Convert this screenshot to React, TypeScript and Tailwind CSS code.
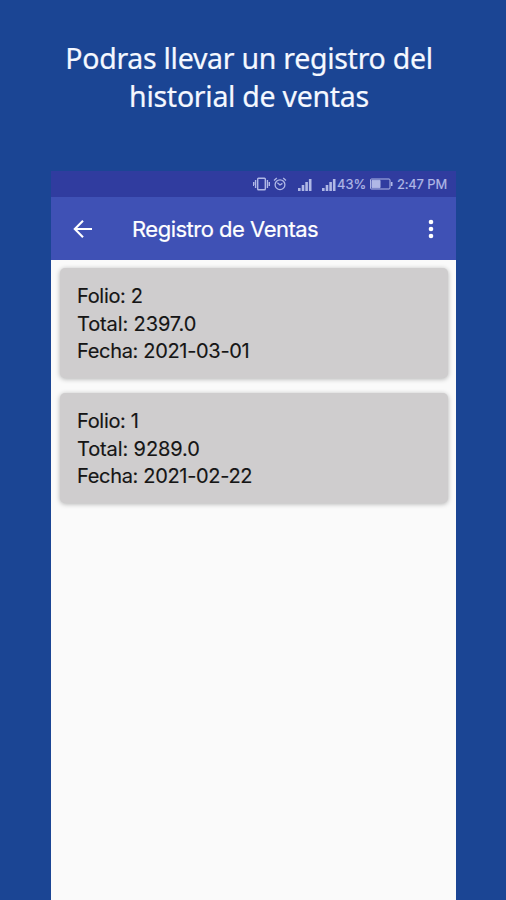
import React, { FC } from 'react';

interface ISale {
  folio: number;
  total: string;
  fecha: string;
}

const sales: ISale[] = [
  { folio: 2, total: '2397.0', fecha: '2021-03-01' },
  { folio: 1, total: '9289.0', fecha: '2021-02-22' },
];

const SignalIcon: FC = () => (
  <svg width="14" height="13" viewBox="0 0 14 13" fill="currentColor">
    <path d="M0 10h2.6v3H0zM3.7 7h2.6v6H3.7zM7.3 4h2.6v9H7.3zM10.9 1h2.6v12h-2.6z" />
  </svg>
);

const StatusBar: FC = () => (
  <div className="flex h-[26px] items-center bg-[#303c9f] pl-[202px] text-[#b0b8e6]">
    <svg width="17" height="14" viewBox="0 0 17 14" fill="none" stroke="currentColor" strokeWidth="1.4">
      <rect x="4.7" y="1.2" width="7.6" height="11.6" rx="0.8" />
      <path d="M2.6 3v8M14.4 3v8M0.7 5v4M16.3 5v4" />
    </svg>
    <svg className="ml-[3px]" width="14" height="14" viewBox="0 0 14 14" fill="none" stroke="currentColor" strokeWidth="1.3">
      <circle cx="7" cy="7.7" r="4.9" />
      <path d="M1 3.4 3.8 1M13 3.4 10.2 1M4.4 5.8 7 8l2.4-1.6" />
    </svg>
    <span className="ml-[11px]"><SignalIcon /></span>
    <span className="ml-[10px]"><SignalIcon /></span>
    <span className="ml-px w-[30px] whitespace-nowrap text-[13px] leading-none [-webkit-text-stroke:0.2px]">43%</span>
    <svg className="ml-[3px]" width="23" height="12" viewBox="0 0 23 12" fill="none" stroke="currentColor">
      <rect x="0.5" y="1" width="19.5" height="10" rx="1" />
      <path d="M2 2.3h8v7.4H2z" fill="currentColor" />
      <path d="M21.7 4v4" strokeWidth="1.6" />
    </svg>
    <span className="ml-[4px] whitespace-nowrap text-[13px] leading-none tracking-[-0.15px] [-webkit-text-stroke:0.2px]">2:47 PM</span>
  </div>
);

const AppBar: FC = () => (
  <div className="flex h-[63px] items-center bg-[#3f51b5] text-white">
    <svg className="ml-[22px]" width="20" height="20" viewBox="0 0 20 20" fill="none" stroke="currentColor" strokeWidth="2.1">
      <path d="M19 10H2.5M10 1.8 1.8 10l8.2 8.2" />
    </svg>
    <h1 className="ml-[39px] flex-1 pt-[2px] whitespace-nowrap text-[22px] tracking-[-0.5px] [-webkit-text-stroke:0.2px]">
      Registro de Ventas
    </h1>
    <svg className="mr-[22px]" width="6" height="20" viewBox="0 0 6 20" fill="currentColor">
      <circle cx="3" cy="3" r="2.3" />
      <circle cx="3" cy="10" r="2.3" />
      <circle cx="3" cy="17" r="2.3" />
    </svg>
  </div>
);

const SaleCard: FC<ISale> = ({ folio, total, fecha }) => (
  <div className="h-[110px] rounded-[5px] bg-[#cfcdce] pt-[15px] pl-[17px] text-[20px] leading-[27.5px] tracking-[-0.32px] text-[#151515] shadow-[0_1px_5px_rgba(0,0,0,0.3)] [-webkit-text-stroke:0.15px]">
    <p>Folio: {folio}</p>
    <p className="tracking-[-0.12px]">Total: {total}</p>
    <p>Fecha: {fecha}</p>
  </div>
);

const App: FC = () => (
  <div className="flex h-[900px] w-[506px] flex-col overflow-hidden bg-[#1b4594]">
    <div className="h-[171px] pt-[39px] pr-[8px] text-center font-['Noto_Sans',sans-serif] text-[28.5px] leading-[38px] tracking-[-0.28px] text-[#f5f8ff] [-webkit-text-stroke:0.2px]">
      <p>Podras llevar un registro del</p>
      <p>historial de ventas</p>
    </div>
    <div className="ml-[51px] flex w-[405px] flex-1 flex-col bg-[#fafafa] font-['Inter',sans-serif]">
      <StatusBar />
      <AppBar />
      <div className="flex flex-col gap-[15px] pt-[8px] pr-[8px] pl-[9px]">
        {sales.map(item => <SaleCard key={item.folio} {...item} />)}
      </div>
    </div>
  </div>
);

export default App;
